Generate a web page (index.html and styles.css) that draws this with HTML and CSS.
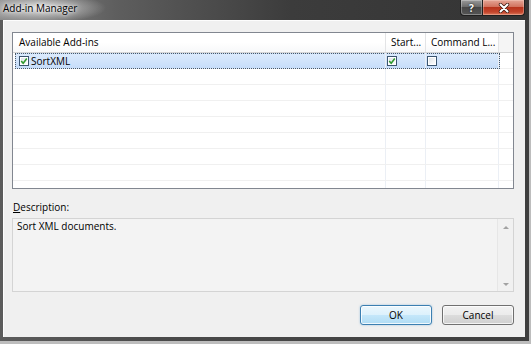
FILE: index.html
```html
<!DOCTYPE html>
<html lang="en">
<head>
  <meta charset="UTF-8" />
  <title>Add-in Manager</title>
  <link rel="stylesheet" href="styles.css">
</head>
<body>
  <div class="window">
    <div class="titlebar">
      <span class="title">Add-in Manager</span>
      <div class="caption-btns">
        <div class="cap cap-help">?</div>
        <div class="cap cap-close">
          <svg width="12" height="10" viewBox="0 0 12 10">
            <path d="M2.5 1.5 L9.5 8.5 M9.5 1.5 L2.5 8.5" stroke="#3a1810" stroke-width="3.4" stroke-linecap="round"/>
            <path d="M2.5 1.5 L9.5 8.5 M9.5 1.5 L2.5 8.5" stroke="#fff" stroke-width="2" stroke-linecap="round"/>
          </svg>
        </div>
      </div>
    </div>

    <div class="client">
      <div class="list">
        <div class="list-head">
          <div class="head-cell first">Available Add-ins</div>
          <div class="head-cell">Start...</div>
          <div class="head-cell">Command L...</div>
          <div class="head-cell filler"></div>
        </div>
        <div class="list-body">
          <div class="row selected">
            <div class="cell first">
              <span class="chk"><svg width="8" height="8" viewBox="0 0 8 8"><path d="M1.2 4 L3.2 6.2 L6.8 1.6" fill="none" stroke="#2f9a2f" stroke-width="1.6"/></svg></span>
              <span class="name">SortXML</span>
            </div>
            <div class="cell">
              <span class="chk"><svg width="8" height="8" viewBox="0 0 8 8"><path d="M1.2 4 L3.2 6.2 L6.8 1.6" fill="none" stroke="#2f9a2f" stroke-width="1.6"/></svg></span>
            </div>
            <div class="cell"><span class="chk"></span></div>
            <div class="cell filler"></div>
          </div>
          <div class="row"><div class="cell"></div><div class="cell"></div><div class="cell"></div><div class="cell filler"></div></div>
          <div class="row"><div class="cell"></div><div class="cell"></div><div class="cell"></div><div class="cell filler"></div></div>
          <div class="row"><div class="cell"></div><div class="cell"></div><div class="cell"></div><div class="cell filler"></div></div>
          <div class="row"><div class="cell"></div><div class="cell"></div><div class="cell"></div><div class="cell filler"></div></div>
          <div class="row"><div class="cell"></div><div class="cell"></div><div class="cell"></div><div class="cell filler"></div></div>
          <div class="row"><div class="cell"></div><div class="cell"></div><div class="cell"></div><div class="cell filler"></div></div>
          <div class="row"><div class="cell"></div><div class="cell"></div><div class="cell"></div><div class="cell filler"></div></div>
          <div class="row"><div class="cell"></div><div class="cell"></div><div class="cell"></div><div class="cell filler"></div></div>
        </div>
      </div>

      <div class="label"><u>D</u>escription:</div>
      <div class="desc">
        <div class="desc-text">Sort XML documents.</div>
        <div class="scrollbar">
          <span class="arrow up"></span>
          <span class="arrow down"></span>
        </div>
      </div>

      <div class="buttons">
        <button class="btn btn-default">OK</button>
        <button class="btn">Cancel</button>
      </div>
    </div>
  </div>
</body>
</html>
```

FILE: styles.css
```css
/* --- Base --- */
* {
  box-sizing: border-box;
}

body {
  margin: 0;
  width: 531px;
  height: 344px;
  overflow: hidden;
  background: #bdbdbd;
  font-family: 'Open Sans', 'Noto Sans', sans-serif;
  font-size: 10px;
  color: #000;
}

/* --- Window frame --- */
.window {
  width: 529px;
  height: 341px;
  display: flex;
  flex-direction: column;
  background: linear-gradient(to right, #5c5c5c 0%, #4a4a4a 30%, #3e3e3e 100%);
}

.titlebar {
  height: 20px;
  display: flex;
  justify-content: space-between;
  align-items: flex-start;
  background:
    radial-gradient(ellipse 66px 15px at 40px 8px, rgba(235,235,235,0.9) 0%, rgba(205,205,205,0.5) 55%, rgba(200,200,200,0) 100%),
    linear-gradient(to right, #8a8a8a 0%, #5e5e5e 22%, #3c3c3c 55%, #343434 100%);
}

.title {
  padding-left: 3px;
  line-height: 16px;
  color: #000;
  text-shadow: 0 0 6px #fff, 0 0 3px rgba(255,255,255,0.8);
}

.caption-btns {
  display: flex;
  margin-right: 4px;
}

.cap {
  height: 16px;
  display: flex;
  align-items: center;
  justify-content: center;
  border: 1px solid #1f1f1f;
  border-top: none;
}

.cap-help {
  width: 22px;
  border-right: none;
  border-radius: 0 0 0 4px;
  background: linear-gradient(#9a9a9a 0%, #6c6c6c 45%, #474747 50%, #555 100%);
  box-shadow: inset 0 0 0 1px rgba(255,255,255,0.3);
  color: #fff;
  font-weight: bold;
  font-size: 10px;
  text-shadow: 0 0 2px #000;
}

.cap-close {
  width: 43px;
  border-radius: 0 0 4px 0;
  background: linear-gradient(#e4a596 0%, #d2735f 45%, #b8341d 50%, #c4452c 80%, #dc7a5c 100%);
  box-shadow: inset 0 0 0 1px rgba(255,220,210,0.35);
}

/* --- Client area --- */
.client {
  margin: 0 4px 0 3px;
  height: 317px;
  background: #f0f0f0;
  border-top: 1px solid #fdfdfd;
  border-left: 1px solid #fdfdfd;
  padding: 11px 11px 0 8px;
  display: flex;
  flex-direction: column;
}

/* --- List view --- */
.list {
  height: 157px;
  border: 1px solid #828790;
  background: #fff;
  overflow: hidden;
}

.list-head, .row {
  display: grid;
  grid-template-columns: 373px 40px 73px 1fr;
}

.list-head {
  height: 20px;
  border-bottom: 1px solid #d5d5d5;
  background: linear-gradient(#fff 0%, #fff 50%, #f7f8f9 100%);
}

.head-cell {
  padding-left: 5px;
  line-height: 19px;
  white-space: nowrap;
  overflow: hidden;
  border-right: 1px solid #e3e4e6;
}
.head-cell.first {
  padding-left: 6px;
}
.head-cell.filler {
  border-right: none;
  background: #f5f5f5;
}

.row {
  height: 16px;
  border-bottom: 1px solid #f0f0f0;
  position: relative;
}

.row.selected::before {
  content: '';
  position: absolute;
  left: 2px;
  top: 0;
  bottom: -1px;
  width: 483px;
  background: linear-gradient(#dbeafc, #c6ddfa);
  border: 1px dotted #4a5866;
}

.cell {
  position: relative;
  display: flex;
  align-items: center;
  padding-left: 1px;
  line-height: 14px;
  border-right: 1px solid #ebeff5;
}
.cell.first {
  padding-left: 6px;
}
.cell.filler {
  border-right: none;
}

.chk {
  width: 10px;
  height: 10px;
  flex: none;
  display: flex;
  align-items: center;
  justify-content: center;
  border: 1px solid #3b5570;
  background: linear-gradient(135deg, #d8dde2 0%, #f4f5f6 60%, #fff 100%);
  box-shadow: inset 0 0 0 1px #fff;
}

.name {
  margin-left: 2px;
}

/* --- Description --- */
.label {
  margin-top: 11px;
  height: 14px;
  line-height: 14px;
  padding-left: 1px;
}

.desc {
  margin-top: 4px;
  height: 74px;
  display: flex;
  border: 1px solid #d4d4d4;
  background: #f3f3f3;
}

.desc-text {
  flex: 1;
  padding: 0 4px;
  line-height: 15px;
}

.scrollbar {
  width: 16px;
  display: flex;
  flex-direction: column;
  align-items: center;
  justify-content: space-between;
  padding: 7px 0 5px;
  border-left: 1px solid #e6e6e6;
  background: #f1f1f1;
}

.arrow {
  width: 0;
  height: 0;
  border-left: 3px solid transparent;
  border-right: 3px solid transparent;
}
.arrow.up {
  border-bottom: 3px solid #a2a2a2;
}
.arrow.down {
  border-top: 3px solid #a2a2a2;
}

/* --- Buttons --- */
.buttons {
  margin-top: 13px;
  display: flex;
  justify-content: flex-end;
  gap: 10px;
}

.btn {
  width: 72px;
  height: 20px;
  padding: 0;
  font: inherit;
  color: #000;
  border: 1px solid #707070;
  border-radius: 3px;
  background: linear-gradient(#f2f2f2 0%, #ebebeb 50%, #dddddd 50%, #cfcfcf 100%);
  box-shadow: inset 0 0 0 1px rgba(255,255,255,0.75);
}

.btn-default {
  border-color: #3c7fb1;
  background: linear-gradient(#ecf7fd 0%, #dcf1fc 50%, #c5e7fa 50%, #b0dcf4 100%);
  box-shadow: inset 0 0 0 1px rgba(255,255,255,0.8), 0 0 2px rgba(60,140,200,0.5);
}
```
